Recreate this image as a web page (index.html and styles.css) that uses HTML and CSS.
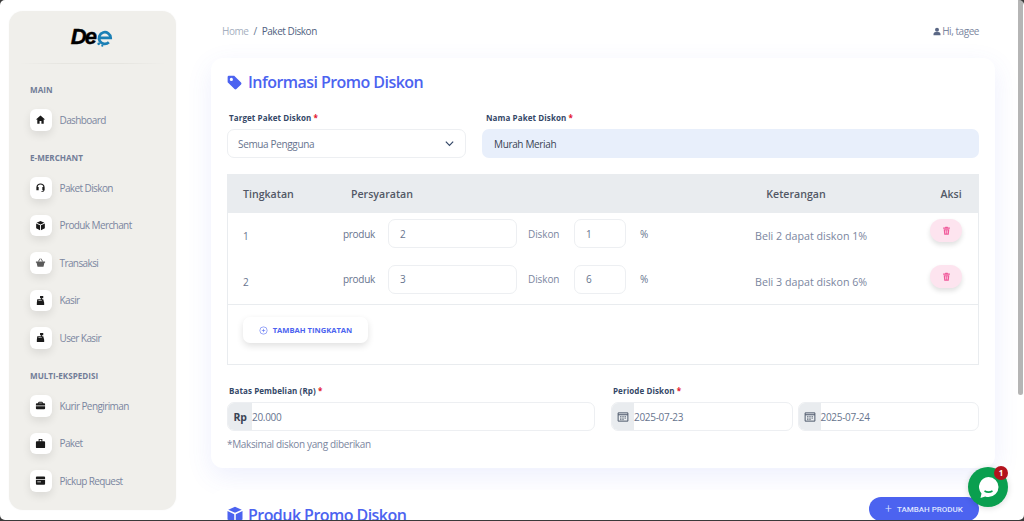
FILE: index.html
```html
<!DOCTYPE html>
<html lang="id">
<head>
<meta charset="utf-8">
<title>Paket Diskon</title>
<link rel="stylesheet" href="styles.css">
</head>
<body>
<div class="app">
  <aside class="sidebar">
    <div class="logo">
      <span class="logo-text">De</span>
      <svg class="logo-e" viewBox="0 0 20 20"><path d="M3.500 9.800h12.800a6.500 6.500 0 1 0-2 5" fill="none" stroke="#1b7fb5" stroke-width="3"/><circle cx="3" cy="16.500" r="1.500" fill="#1b7fb5"/><circle cx="7" cy="18.500" r="1.200" fill="#1b7fb5"/></svg>
    </div>
    <div class="logo-rule"></div>
    <nav class="nav">
      <div class="nav-label">MAIN</div>
      <a class="nav-item"><span class="nav-icon"><svg viewBox="0 0 24 24"><path d="M12 3 2 12h3v9h5v-6h4v6h5v-9h3z"/></svg></span>Dashboard</a>
      <div class="nav-label">E-MERCHANT</div>
      <a class="nav-item"><span class="nav-icon"><svg viewBox="0 0 24 24"><path d="M12 3a9 9 0 0 0-9 9v6h5v-7H5.600a6.500 6.500 0 0 1 12.800 0H16v7h2.500a2 2 0 0 1-2 1.500H14v2h2.500a4 4 0 0 0 4-3.500H21v-6a9 9 0 0 0-9-9z"/></svg></span>Paket Diskon</a>
      <a class="nav-item"><span class="nav-icon"><svg viewBox="0 0 24 24"><path d="M12 2 3.500 6 12 10l8.500-4zM2.500 7.500V18l8.500 4.500V11.500zM21.500 7.500 13 11.500v11L21.500 18z"/></svg></span>Produk Merchant</a>
      <a class="nav-item"><span class="nav-icon"><svg viewBox="0 0 24 24"><path d="M2 10h20v2.500h-1.500L18.500 21h-13l-2-8.500H2zM6.500 9l4-6 1.500 1-3.300 5zM17.500 9l-4-6-1.500 1 3.300 5z" fill="#5a5a5a"/></svg></span>Transaksi</a>
      <a class="nav-item"><span class="nav-icon"><svg viewBox="0 0 24 24"><path d="M11 2h7v5h-3v2h3l2 8v5H4v-5l1-8h8V7h-2zM8 11v2h2v-2zm4 0v2h2v-2z"/></svg></span>Kasir</a>
      <a class="nav-item"><span class="nav-icon"><svg viewBox="0 0 24 24"><path d="M11 2h7v5h-3v2h3l2 8v5H4v-5l1-8h8V7h-2zM8 11v2h2v-2zm4 0v2h2v-2z"/></svg></span>User Kasir</a>
      <div class="nav-label">MULTI-EKSPEDISI</div>
      <a class="nav-item"><span class="nav-icon"><svg viewBox="0 0 24 24"><path d="M9 4h6a2 2 0 0 1 2 2v1h3a2 2 0 0 1 2 2v3H2V9a2 2 0 0 1 2-2h3V6a2 2 0 0 1 2-2zm0 2v1h6V6zM2 13.500h20V18a2 2 0 0 1-2 2H4a2 2 0 0 1-2-2z"/></svg></span>Kurir Pengiriman</a>
      <a class="nav-item"><span class="nav-icon"><svg viewBox="0 0 24 24"><path d="M8 2h8v5h4a2 2 0 0 1 2 2v11a2 2 0 0 1-2 2H4a2 2 0 0 1-2-2V9a2 2 0 0 1 2-2h4zm2 2v3h4V4z"/></svg></span>Paket</a>
      <a class="nav-item"><span class="nav-icon"><svg viewBox="0 0 24 24"><path d="M4 3h16a2 2 0 0 1 2 2v4H2V5a2 2 0 0 1 2-2zM2 11h20v8a2 2 0 0 1-2 2H4a2 2 0 0 1-2-2zm3 3v2h8v-2z"/></svg></span>Pickup Request</a>
    </nav>
  </aside>

  <main class="main">
    <header class="topbar">
      <div class="crumbs"><span class="crumb-home">Home</span><span class="crumb-sep">/</span><span class="crumb-now">Paket Diskon</span></div>
      <div class="user"><svg viewBox="0 0 24 24"><circle cx="12" cy="7" r="6"/><path d="M1.500 23v-4A6.500 6.500 0 0 1 8 13.500h8a6.500 6.500 0 0 1 6.500 5.500v4z"/></svg>Hi, tagee</div>
    </header>

    <section class="card">
      <h2 class="card-title"><svg viewBox="0 0 24 24"><path d="M1 3A2 2 0 0 1 3 1h8.500l11 11a2.200 2.200 0 0 1 0 3L15 22.500a2.200 2.200 0 0 1-3 0L1 11.500zM7 4.500a2.500 2.500 0 1 0 0 5 2.500 2.500 0 0 0 0-5z"/></svg>Informasi Promo Diskon</h2>

      <div class="form-row top-row">
        <div class="field f-target">
          <label class="label">Target Paket Diskon <i>*</i></label>
          <div class="control select"><span>Semua Pengguna</span><svg viewBox="0 0 12 12"><path d="M2 4l4 4 4-4" fill="none" stroke="#344767" stroke-width="1.300"/></svg></div>
        </div>
        <div class="field f-name">
          <label class="label">Nama Paket Diskon <i>*</i></label>
          <div class="control filled"><span>Murah Meriah</span></div>
        </div>
      </div>

      <div class="tier-box">
        <div class="tier-head">
          <span class="c-level">Tingkatan</span>
          <span class="c-req">Persyaratan</span>
          <span class="c-note">Keterangan</span>
          <span class="c-act">Aksi</span>
        </div>
        <div class="tier-rows">
          <div class="tier-row">
            <span class="num">1</span>
            <div class="req">
              <span class="unit">produk</span><span class="mini wide">2</span>
              <span class="word">Diskon</span><span class="mini narrow">1</span>
              <span class="pct">%</span>
            </div>
            <span class="note">Beli 2 dapat diskon 1%</span>
            <span class="row-act"><button class="trash"><svg viewBox="0 0 24 24"><path d="M9 2h6l1 2h5v3H3V4h5zM4.500 8.500h15L18 23H6zM9 11v9h2v-9zm4 0v9h2v-9z"/></svg></button></span>
          </div>
          <div class="tier-row">
            <span class="num">2</span>
            <div class="req">
              <span class="unit">produk</span><span class="mini wide">3</span>
              <span class="word">Diskon</span><span class="mini narrow">6</span>
              <span class="pct">%</span>
            </div>
            <span class="note">Beli 3 dapat diskon 6%</span>
            <span class="row-act"><button class="trash"><svg viewBox="0 0 24 24"><path d="M9 2h6l1 2h5v3H3V4h5zM4.500 8.500h15L18 23H6zM9 11v9h2v-9zm4 0v9h2v-9z"/></svg></button></span>
          </div>
        </div>
        <div class="tier-foot">
          <button class="add-tier"><svg viewBox="0 0 16 16"><circle cx="8" cy="8" r="6.500" fill="none" stroke="#4c63f0"/><path d="M8 5v6M5 8h6" stroke="#4c63f0"/></svg>TAMBAH TINGKATAN</button>
        </div>
      </div>

      <div class="form-row bottom-row">
        <div class="field f-limit">
          <label class="label">Batas Pembelian (Rp) <i>*</i></label>
          <div class="group"><span class="addon rp">Rp</span><span class="group-value">20.000</span></div>
          <p class="hint">*Maksimal diskon yang diberikan</p>
        </div>
        <div class="field f-period">
          <label class="label">Periode Diskon <i>*</i></label>
          <div class="dates">
            <div class="group"><span class="addon"><svg viewBox="0 0 16 16"><path d="M1.500 2.500h13v11h-13z" fill="none" stroke="#4a5568" stroke-width="1.300"/><path d="M1.500 5h13" stroke="#4a5568" stroke-width="1.500"/><path d="M4 7.500h2M7 7.500h2M10 7.500h2M4 9.500h2M7 9.500h2M10 9.500h2M4 11.500h2M7 11.500h2" stroke="#4a5568"/></svg></span><span class="group-value">2025-07-23</span></div>
            <div class="group"><span class="addon"><svg viewBox="0 0 16 16"><path d="M1.500 2.500h13v11h-13z" fill="none" stroke="#4a5568" stroke-width="1.300"/><path d="M1.500 5h13" stroke="#4a5568" stroke-width="1.500"/><path d="M4 7.500h2M7 7.500h2M10 7.500h2M4 9.500h2M7 9.500h2M10 9.500h2M4 11.500h2M7 11.500h2" stroke="#4a5568"/></svg></span><span class="group-value">2025-07-24</span></div>
          </div>
        </div>
      </div>
    </section>

    <section class="card second">
      <div class="second-head">
        <h2 class="card-title"><svg class="box-icon" viewBox="0 0 24 24"><path d="M12 1 3 5l9 4 9-4zM2 6.500V18l9 4.500V11zM22 6.500 13 11v11.500l9-4.500z"/></svg>Produk Promo Diskon</h2>
        <button class="add-product"><span class="plus">+</span>TAMBAH PRODUK</button>
      </div>
    </section>
  </main>

  <div class="scrollbar"><div class="thumb"></div></div>
</div>

<div class="chat">
  <svg viewBox="0 0 40 40"><path d="M20.500 10a10 10 0 0 1 0 20c-1.200 0-2.300-.200-3.300-.600L12.500 31l1-4.500A10 10 0 0 1 20.500 10z" fill="#fff"/><path d="M16.500 24q4 2.200 8 0" stroke="#0a9f4f" stroke-width="1.600" fill="none"/></svg>
  <span class="chat-badge">1</span>
</div>
<div class="frame"></div>
</body>
</html>
```
FILE: styles.css
```css
* { box-sizing: border-box; }
html, body { margin: 0; height: 521px; overflow: hidden; background: #fff; }
body { font-family: "Open Sans", "Noto Sans", sans-serif; color: #67748e; position: relative; }

.app { display: flex; height: 521px; overflow: hidden; }

/* Sidebar */
.sidebar { flex: 0 0 167px; height: 499px; margin: 11px 0 0 9px; background: #f0efeb; border-radius: 14px; box-shadow: 0 0 2px rgba(0,0,0,.04); }
.logo { height: 52px; display: flex; align-items: center; justify-content: center; }
.logo-text { font-family: "Liberation Sans", sans-serif; font-weight: 700; font-style: italic; font-size: 22px; letter-spacing: -1.8px; color: #000; line-height: 1; -webkit-text-stroke: .4px #000; }
.logo-e { width: 18px; height: 18px; margin-left: 1px; margin-top: 1px; }
.logo-rule { height: 1px; margin: 0 9px; background: linear-gradient(90deg, transparent, #e6e5e0 30%, #e6e5e0 70%, transparent); }
.nav { padding-left: 21px; padding-top: 20px; }
.nav-label { font-size: 8.100px; font-weight: 700; color: #727d98; line-height: 12px; height: 12px; margin: 13.500px 0 5px; }
.nav-label:first-child { margin-top: 0; }
.nav-item { display: flex; align-items: center; gap: 8px; height: 37.500px; font-size: 10px; color: #7b86a0; letter-spacing: -.6px; }
.nav-icon { width: 21.500px; height: 21.500px; flex: none; display: flex; align-items: center; justify-content: center; background: #fff; border-radius: 6px; box-shadow: 0 4px 8px rgba(0,0,0,.09); }
.nav-icon svg { width: 11px; height: 11px; fill: #1a1a1a; }

/* Main */
.main { flex: 1; min-width: 0; padding: 0 22px 0 35px; }
.topbar { height: 58px; display: flex; justify-content: space-between; align-items: center; padding: 4px 16px 0 11px; }
.crumbs { font-size: 10px; display: flex; gap: 5px; letter-spacing: -.45px; }
.crumb-home { color: #a6afc0; }
.crumb-sep { color: #67748e; }
.crumb-now { color: #525f7f; }
.user { font-size: 10px; color: #7b86a0; display: flex; align-items: center; gap: 1px; letter-spacing: -.45px; }
.user svg { width: 8px; height: 9px; fill: #5a6785; }

.card { background: #fff; border-radius: 12px; box-shadow: 0 8px 26px rgba(76,99,240,.1); padding: 13px 16px 0; height: 410px; }
.card-title { margin: 0; font-size: 16px; line-height: 22px; font-weight: 600; color: #4c63f0; display: flex; align-items: center; gap: 6px; letter-spacing: -.55px; white-space: nowrap; }
.card-title svg { width: 15px; height: 15px; fill: #4c63f0; }
.card-title .box-icon { width: 18px; height: 18px; margin-left: -1px; margin-right: -2px; }

.form-row { display: flex; gap: 16px; }
.top-row { margin-top: 19px; }
.field { min-width: 0; }
.f-target { flex: 0 0 239px; }
.f-name { flex: 1; }
.f-name .label { padding-left: 4px; }
.label { display: block; font-size: 8px; font-weight: 700; color: #344767; line-height: 12px; padding-left: 2px; margin-bottom: 5px; letter-spacing: .1px; }
.label i { color: #e3152e; font-style: normal; }

.control { height: 29px; border-radius: 7px; display: flex; align-items: center; justify-content: space-between; padding: 0 10px; font-size: 10px; letter-spacing: -.35px; }
.select { border: 1px solid #edeff2; color: #67748e; background: #fff; }
.select svg { width: 11px; height: 11px; }
.filled { background: #e8effb; color: #3a4354; padding-left: 12px; }

/* Tier table */
.tier-box { margin-top: 16px; border: 1px solid #e9ecef; border-top: 0; height: 191px; }
.tier-head { height: 39px; background: #e9ecef; display: flex; align-items: center; font-size: 10.600px; font-weight: 600; color: #525866; margin: 0 -1px; }
.c-level { flex: 0 0 108px; margin-left: 16px; }
.c-req { flex: 0 0 390px; }
.c-note { flex: 0 0 110px; text-align: center; }
.c-act { flex: 0 0 200px; text-align: center; }
.tier-rows { height: 92px; border-bottom: 1px solid #e9ecef; }
.tier-row { height: 45.500px; display: flex; align-items: flex-start; padding-top: 6px; font-size: 10px; letter-spacing: -.1px; }
.num { padding-top: 10px; padding-left: 15px; color: #67748e; flex: 0 0 115px; line-height: 14px; }
.req { flex: 0 0 412px; display: flex; align-items: center; height: 29px; }
.unit { width: 45px; color: #67748e; font-size: 10px; letter-spacing: -.3px; }
.mini { height: 29px; border: 1px solid #edeff2; border-radius: 7px; display: flex; align-items: center; padding-left: 11px; color: #67748e; background: #fff; }
.wide { width: 129px; }
.word { width: 57px; padding-left: 11px; color: #7b86a0; }
.narrow { width: 52px; }
.pct { margin-left: 14px; font-size: 10px; color: #67748e; }
.note { flex: 0 0 112px; padding-top: 10px; color: #7b86a0; font-size: 10.700px; letter-spacing: 0; line-height: 14px; white-space: nowrap; text-align: center; }
.row-act { flex: 1; display: flex; justify-content: flex-end; padding-right: 16px; }
.trash { width: 32px; height: 23px; border: 0; border-radius: 12px; background: #fde4ef; box-shadow: 0 3px 5px rgba(0,0,0,.12); padding: 0; display: flex; align-items: center; justify-content: center; }
.trash svg { width: 9px; height: 9px; fill: #f0589a; }

.tier-foot { padding: 12px 0 0 15px; }
.add-tier { width: 125px; height: 26px; border: 0; border-radius: 7px; background: #fff; box-shadow: 0 3px 7px rgba(0,0,0,.12); font: 700 7.600px "Open Sans", sans-serif; color: #4c63f0; display: flex; align-items: center; justify-content: center; gap: 5px; }
.add-tier svg { width: 9px; height: 9px; }

/* Bottom fields */
.bottom-row { margin-top: 20px; gap: 16px; }
.f-limit { flex: 0 0 368px; }
.f-period { flex: 1; }
.group { height: 29px; border: 1px solid #edeff2; border-radius: 7px; display: flex; overflow: hidden; font-size: 10px; letter-spacing: -.3px; color: #67748e; align-items: center; background: #fff; }
.addon { align-self: stretch; width: 22px; margin: -1px 0; background: #e9ecef; display: flex; align-items: center; justify-content: center; color: #3a4354; font-weight: 700; flex: none; font-size: 10.500px; }
.addon.rp { width: 24px; }
.addon svg { width: 12px; height: 12px; }
.group-value { padding-left: 0; }
.hint { margin: 6px 0 0; font-size: 10px; letter-spacing: -.35px; line-height: 14px; color: #7b86a0; }
.dates { display: flex; gap: 5px; }
.dates .group { flex: 1; }

.second { margin-top: 22px; height: 80px; padding-top: 14px; box-shadow: none; }
.second-head { display: flex; justify-content: space-between; align-items: flex-start; }
.add-product { width: 110px; height: 24px; margin-top: -7px; border: 0; border-radius: 12px; background: #4c63f0; color: #dfe4ff; font: 500 8px "Roboto", sans-serif; display: flex; align-items: center; justify-content: center; gap: 5px; }
.plus { font-size: 12px; font-weight: 300; line-height: 1; }

.scrollbar { flex: 0 0 7px; background: #fff; }
.thumb { width: 5px; height: 395px; background: #b5b5b5; border-radius: 0 0 3px 3px; margin-left: 1px; }

/* Overlays */
.chat { position: absolute; left: 968px; top: 467px; width: 40px; height: 40px; border-radius: 50%; background: #0a9f4f; box-shadow: 0 1px 6px rgba(0,0,0,.15); }
.chat svg { width: 40px; height: 40px; display: block; }
.chat-badge { position: absolute; left: 26px; top: -1px; width: 14px; height: 14px; border-radius: 50%; background: #b3121d; color: #fff; font: 700 8px/14px "Open Sans", sans-serif; text-align: center; }
.frame { position: absolute; left: 0; right: 0; top: 0; bottom: 1px; border-radius: 5px; box-shadow: 0 0 0 6px #3a3a3a; pointer-events: none; }
```
